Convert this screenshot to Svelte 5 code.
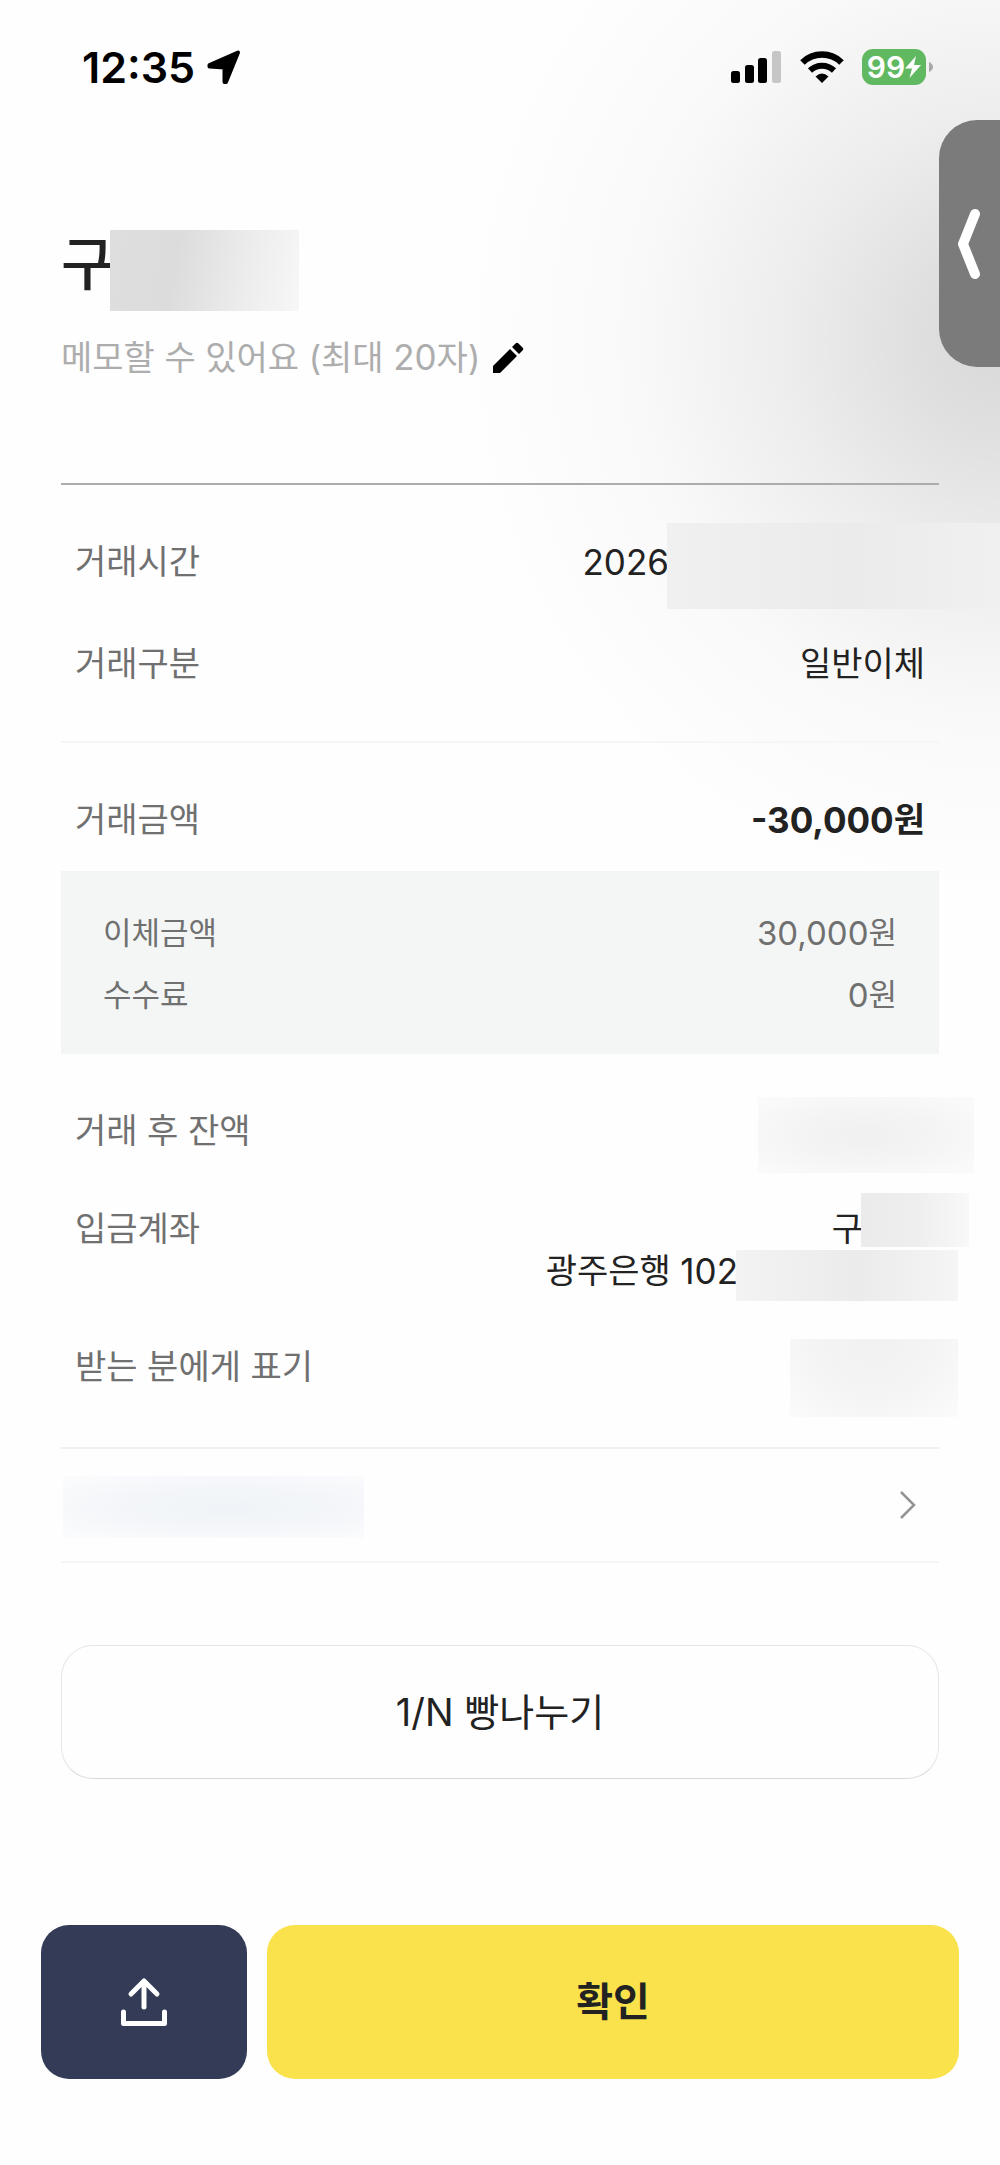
<script>
  const fees = [
    { label: '이체금액', amount: '30,000' },
    { label: '수수료', amount: '0' }
  ]
</script>

<div class="page">
  <header class="status">
    <div class="clock">
      <span>12:35</span>
      <svg width="36" height="36" viewBox="0 0 36 36">
        <path d="M3.500 16L32 3.500L20 33L18.500 33L18.500 18.500L3.500 17.500Z" fill="#000" stroke="#000" stroke-width="4" stroke-linejoin="round" />
      </svg>
    </div>
    <div class="indicators">
      <svg width="52" height="34" viewBox="0 0 52 34">
        <rect x="1" y="21" width="9" height="12" rx="2.500" />
        <rect x="15" y="15" width="9" height="18" rx="2.500" />
        <rect x="28" y="8" width="9" height="25" rx="2.500" />
        <rect x="42" y="1" width="9" height="32" rx="2.500" fill="#c6c6c6" />
      </svg>
      <svg width="44" height="34" viewBox="0 0 44 34" fill="none" stroke="#000">
        <path d="M2.500 12.500A28 28 0 0 1 41.500 12.500" stroke-width="6.500" />
        <path d="M10 20.500A17.500 17.500 0 0 1 34 20.500" stroke-width="6" />
        <path d="M15.500 26.500Q22 20.500 28.500 26.500L22 33Z" fill="#000" stroke="none" />
      </svg>
      <div class="battery">
        <div class="charge">
          <span>99</span>
          <svg width="16" height="22" viewBox="0 0 16 22"><path d="M11 0L0 12.500L7 12.500L4.500 22L16 9L9 9Z" fill="#fff" /></svg>
        </div>
        <svg width="4" height="12" viewBox="0 0 4 12"><path d="M0 1Q4 3 4 6T0 11Z" fill="#a8a8a8" /></svg>
      </div>
    </div>
  </header>

  <button class="handle" aria-label="열기">
    <svg width="24" height="72" viewBox="0 0 24 72"><path d="M18 6L6 36L18 66" fill="none" stroke="#fff" stroke-width="10" stroke-linecap="round" stroke-linejoin="round" /></svg>
  </button>

  <main>
    <div class="heading">
      <h1>구<span class="mask mask-title"></span></h1>
      <button class="memo">
        <span>메모할 수 있어요 (최대 <span class="num">20</span>자)</span>
        <svg width="32" height="32" viewBox="0 0 32 32"><path d="M1 31L1 24L18 7L25 14L8 31ZM20 5L23.500 1.500Q25 0 26.500 1.500L30.500 5.500Q32 7 30.500 8.500L27 12Z" /></svg>
      </button>
    </div>

    <dl class="section">
      <div class="row">
        <dt>거래시간</dt>
        <dd><span class="num">2026</span><span class="mask mask-time"></span></dd>
      </div>
      <div class="row">
        <dt>거래구분</dt>
        <dd>일반이체</dd>
      </div>
    </dl>

    <dl class="section amount">
      <div class="row">
        <dt>거래금액</dt>
        <dd class="total"><span class="num">-30,000</span>원</dd>
      </div>
    </dl>

    <dl class="fees">
      {#each fees as fee}
        <div class="fee">
          <dt>{fee.label}</dt>
          <dd><span class="num">{fee.amount}</span>원</dd>
        </div>
      {/each}
    </dl>

    <dl class="detail">
      <div class="row">
        <dt>거래 후 잔액</dt>
        <dd><span class="mask mask-balance"></span></dd>
      </div>
      <div class="row account">
        <dt>입금계좌</dt>
        <dd>
          <div class="line">구<span class="mask mask-name"></span></div>
          <div class="line">광주은행&nbsp;<span class="num">102</span><span class="mask mask-account"></span></div>
        </dd>
      </div>
      <div class="row">
        <dt>받는 분에게 표기</dt>
        <dd><span class="mask mask-note"></span></dd>
      </div>
    </dl>

    <a class="more" href="#more" aria-label="더보기">
      <span class="mask mask-link"></span>
      <svg width="18" height="30" viewBox="0 0 18 30"><path d="M2 2L15 15L2 28" fill="none" stroke="#949494" stroke-width="2.500" /></svg>
    </a>

    <button class="split">1/N 빵나누기</button>
  </main>

  <footer>
    <button class="share" aria-label="공유">
      <svg width="48" height="50" viewBox="0 0 48 50" fill="none" stroke="#fff" stroke-width="5" stroke-linecap="round" stroke-linejoin="round">
        <path d="M24 30V4M11 17L24 4L37 17M3.500 35V46.500H44.500V35" />
      </svg>
    </button>
    <button class="confirm">확인</button>
  </footer>
</div>

<style>
  :global(body) {
    margin: 0;
    background: #fefefe;
  }
  .page {
    position: relative;
    overflow: hidden;
    font-family: Inter, "Noto Sans CJK KR", sans-serif;
    font-size: 34px;
    line-height: 42px;
    color: #222;
    background: radial-gradient(540px 560px at 100% 340px, rgba(0, 0, 0, .15) 0%, rgba(0, 0, 0, .12) 16%, rgba(0, 0, 0, .065) 40%, rgba(0, 0, 0, .02) 68%, rgba(0, 0, 0, 0) 100%) #fefefe;
  }
  button {
    font: inherit;
    color: inherit;
    border: none;
    background: none;
    padding: 0;
    cursor: pointer;
  }
  svg {
    display: block;
    flex: none;
  }
  dl, dd, h1 {
    margin: 0;
  }

  .status {
    display: flex;
    justify-content: space-between;
    align-items: center;
    height: 134px;
    padding: 0 67px 0 82px;
  }
  .clock, .indicators, .battery, .charge {
    display: flex;
    align-items: center;
  }
  .clock {
    gap: 11px;
    font-size: 43px;
    font-weight: 600;
    color: #000;
  }
  .indicators {
    gap: 18px;
  }
  .battery {
    gap: 3px;
  }
  .charge {
    justify-content: center;
    width: 64px;
    height: 36px;
    border-radius: 11px;
    background: #60b860;
    color: #fff;
    font-size: 30px;
    font-weight: 600;
  }

  .handle {
    position: absolute;
    top: 120px;
    right: 0;
    display: flex;
    align-items: center;
    width: 61px;
    height: 247px;
    padding-left: 18px;
    border-radius: 38px 0 0 38px;
    background: #7b7b7b;
  }

  main {
    padding: 0 61px;
  }
  .heading {
    padding: 96px 0 104px;
    border-bottom: 2px solid #acacac;
  }
  h1 {
    display: flex;
    height: 81px;
    font-size: 58px;
    line-height: 68px;
    font-weight: 500;
  }
  .memo {
    display: flex;
    align-items: center;
    gap: 12px;
    margin-top: 25px;
    color: #adadad;
  }
  .num {
    font-size: 35px;
  }

  .section {
    padding: 26px 0;
    border-bottom: 2px solid #f6f6f6;
  }
  .amount {
    padding-bottom: 0;
    border: none;
  }
  .row {
    display: flex;
    justify-content: space-between;
    align-items: center;
    height: 102px;
    padding: 0 14px;
  }
  dt {
    color: #707070;
  }
  dd, .line {
    display: flex;
    justify-content: flex-end;
    align-items: center;
  }
  .total {
    font-weight: 700;
  }
  .fees {
    padding: 31px 42px 28px;
    background: #f4f6f5;
    font-size: 31px;
    color: #707070;
  }
  .fees .num {
    font-size: 33px;
  }
  .fee {
    display: flex;
    justify-content: space-between;
    align-items: center;
    height: 62px;
  }
  .detail {
    padding: 28px 0 31px;
    border-bottom: 2px solid #f0f0f0;
  }
  .detail .row {
    height: 98px;
  }
  .detail .account {
    align-items: flex-start;
    height: auto;
    padding: 28px 14px 26px;
  }
  .account dd {
    flex-direction: column;
    align-items: flex-end;
  }
  .line {
    height: 42px;
  }

  /* blurred private values */
  .mask {
    flex: none;
    background: #f1f1f1;
  }
  .mask-title {
    width: 189px;
    height: 81px;
    margin-left: -4px;
    background: linear-gradient(100deg, #dedede, #dcdcdc 35%, #ececec 70%, #f7f7f7);
  }
  .mask-time {
    width: 333px;
    height: 86px;
    margin: 8px -75px 0 -2px;
    background: linear-gradient(90deg, #f0f0f0, #ebebeb 55%, #f0f0f0);
  }
  .mask-balance {
    width: 216px;
    height: 76px;
    margin: 8px -49px 0 0;
    background: radial-gradient(ellipse at 50% 50%, #f0f0f0, #f4f4f4 45%, #fafafa 90%);
  }
  .mask-name {
    width: 108px;
    height: 54px;
    margin: -18px -44px 0 -2px;
    background: linear-gradient(90deg, #ebebeb, #eee 50%, #f8f8f8);
  }
  .mask-account {
    width: 222px;
    height: 51px;
    margin: 8px -33px 0 -2px;
    background: linear-gradient(90deg, #f3f3f3, #ebebeb 55%, #f5f5f5);
  }
  .mask-note {
    width: 168px;
    height: 78px;
    margin: 22px -33px 0 0;
    background: radial-gradient(ellipse at 50% 0%, #f1f1f1, #f4f4f4 50%, #fbfbfb);
  }
  .mask-link {
    width: 301px;
    height: 62px;
    margin-top: 4px;
    background: radial-gradient(ellipse at 55% 50%, #eff4f8, #f4f6f9 50%, #fafbfd 90%);
  }

  .more {
    display: flex;
    justify-content: space-between;
    align-items: center;
    height: 112px;
    padding: 0 22px 0 2px;
    border-bottom: 2px solid #f6f6f6;
  }
  .split {
    width: 100%;
    height: 134px;
    margin-top: 82px;
    border: 1px solid #e6e6e6;
    border-bottom-color: #d8d8d8;
    border-radius: 32px;
    background: #fefefe;
    font-size: 38px;
  }

  footer {
    display: flex;
    gap: 20px;
    padding: 146px 41px 87px;
  }
  footer button {
    height: 154px;
    border-radius: 28px;
  }
  .share {
    display: flex;
    justify-content: center;
    align-items: center;
    width: 206px;
    background: #343b57;
  }
  .confirm {
    flex: 1;
    background: #fae24c;
    font-size: 40px;
    font-weight: 700;
  }
</style>
